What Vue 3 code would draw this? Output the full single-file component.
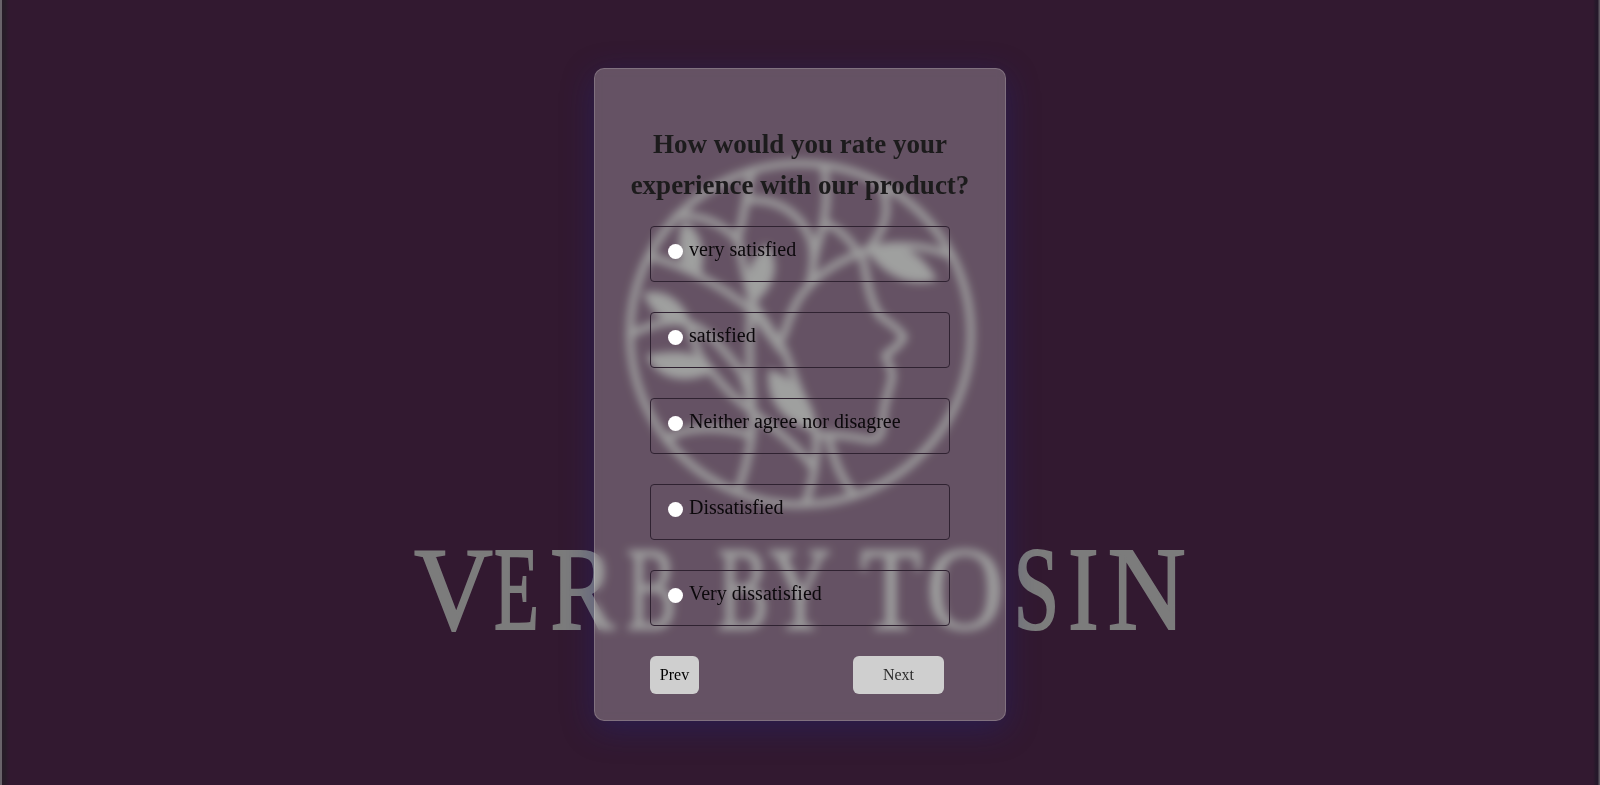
<script setup>
import { ref } from 'vue'

const selected = ref(null)
const options = ['very satisfied', 'satisfied', 'Neither agree nor disagree', 'Dissatisfied', 'Very dissatisfied']

// char, left ink edge, right ink edge, glyph ink start and end (per 1000 em)
const wordmark = [
  ['V', 416, 490, 16, 697],
  ['E', 495, 538, 12, 597],
  ['R', 552, 614, 17, 659],
  ['B', 628, 671, 17, 593],
  ['B', 719, 763, 17, 593],
  ['Y', 771, 829, 22, 703],
  ['T', 862, 920, 17, 593],
  ['O', 930, 1000, 34, 688],
  ['S', 1017, 1054, 42, 491],
  ['I', 1070, 1097, 18, 315],
  ['N', 1109, 1184, 12, 707],
].map(([char, left, right, a, b]) => {
  const scale = (right - left) / ((b - a) * 0.118)
  return { char, transform: `translate(${left - a * 0.118 * scale} 629) scale(${scale} 1)` }
})
</script>

<template>
  <main class="page">
    <svg class="brand" viewBox="0 0 1600 785" width="1600" height="785" aria-hidden="true">
      <g fill="none" stroke="#7c7c7c" stroke-width="7.6" stroke-linecap="round" stroke-linejoin="round">
        <circle cx="800.5" cy="334" r="170.5" />
        <path d="M753 170C746 190 745 215 738 237C741 258 746 280 753 303L784 350L816 434" />
        <path d="M748 200C780 198 802 216 811 240C815 255 814 268 809 285" />
        <path d="M824 168C829 193 827 218 817 247C814 260 812 270 811 279" />
        <path d="M825 223C842 229 854 245 863 260C867 277 868 297 880 316C889 323 900 329 904 337C900 344 893 350 885 355C888 364 893 369 892 378C889 393 883 403 883 419C882 435 880 440 870 440C852 437 840 434 816 435" />
        <path d="M882 188C890 207 887 229 867 250C847 258 824 268 807 288C794 302 789 319 783 337" />
        <path d="M867 251C892 242 926 244 953 257" />
        <path d="M676 216C700 214 723 223 738 241" />
        <path d="M652 257C686 266 723 287 751 310L781 350" />
        <path d="M630 335C648 325 668 320 683 322C706 326 722 348 740 370Q747 383 752 410" />
        <path d="M688 324L699 354C714 377 732 398 757 415C779 432 799 448 811 465" />
        <path d="M751 303C748 340 750 375 753 413Q753 447 740 485" />
        <path d="M667 439C685 426 723 425 752 436" />
        <path d="M816 437C818 457 813 480 806 502" />
        <path d="M829 440C835 463 841 477 854 495" />
      </g>
      <g fill="#7f807f" stroke="#7f807f" stroke-width="3" stroke-linejoin="round">
        <path d="M868 250C893 238 920 252 935 279C911 286 886 276 868 250Z" />
        <path d="M684 223C700 232 704 250 700 273L684 268C679 251 680 235 684 223Z" />
        <path d="M766 246C780 264 773 286 755 301C744 284 748 265 766 246Z" />
        <path d="M645 294C666 290 683 302 690 325C669 325 653 314 645 294Z" />
        <path d="M648 356C668 353 694 347 713 371C689 382 661 381 648 356Z" />
        <path d="M770 371C797 380 813 401 816 432C780 418 767 398 770 371Z" />
      </g>
      <g class="wordmark">
        <text v-for="(l, i) in wordmark" :key="i" :transform="l.transform">{{ l.char }}</text>
      </g>
    </svg>

    <form class="card" @submit.prevent>
      <h1 class="title">How would you rate your experience with our product?</h1>
      <div class="options">
        <label v-for="o in options" :key="o" class="option">
          <input v-model="selected" class="radio" type="radio" name="rating" :value="o" />
          <span>{{ o }}</span>
        </label>
      </div>
      <div class="actions">
        <button class="btn prev" type="button">Prev</button>
        <button class="btn next" type="button">Next</button>
      </div>
    </form>
  </main>
</template>

<style>
body {
  background: #321930;
}
</style>

<style scoped>
.page {
  position: relative;
  box-sizing: border-box;
  height: 785px;
  padding-top: 68px;
  overflow: hidden;
  font-family: "Liberation Serif", "Times New Roman", serif;
  background: linear-gradient(90deg, #69636a 0 1.5px, #271c28 2px 5px, #321930 9px calc(100% - 7px), #25182a calc(100% - 4px) calc(100% - 2px), #5d5660 calc(100% - 1px));
}
.brand {
  position: absolute;
  top: 0;
  left: 0;
}
.wordmark {
  font-family: "Liberation Serif", serif;
  font-size: 118px;
  fill: #7c7c7c;
  stroke: #7c7c7c;
  stroke-width: 2.2px;
}
.card {
  position: relative;
  box-sizing: border-box;
  width: 412px;
  height: 653px;
  margin: 0 auto;
  padding: 55px 30px 0;
  background: rgba(255, 255, 255, 0.25);
  border: 1px solid rgba(255, 255, 255, 0.18);
  border-radius: 10px;
  box-shadow: 0 8px 32px 0 rgba(31, 38, 135, 0.37);
  backdrop-filter: blur(4px);
}
.title {
  margin: 0 0 20px;
  font-size: 27px;
  line-height: 41px;
  text-align: center;
  color: #1c1b1c;
}
.options {
  display: flex;
  flex-direction: column;
  gap: 30px;
  width: 300px;
  margin: 0 auto;
}
.option {
  display: flex;
  box-sizing: border-box;
  height: 56px;
  padding: 11px 16.5px;
  gap: 6.5px;
  border: 1px solid #2f2231;
  border-radius: 4px;
  font-size: 20px;
  line-height: 23px;
  color: #0b080b;
}
.radio {
  appearance: none;
  flex: none;
  width: 15px;
  height: 15px;
  margin: 5.5px 0 0;
  border-radius: 50%;
  background: #fff;
}
.radio:checked {
  border: 4px solid #fff;
  background: #321930;
}
.actions {
  display: flex;
  justify-content: space-between;
  width: 294px;
  margin: 30px 0 0 25px;
}
.btn {
  height: 38px;
  padding: 0;
  border: 0;
  border-radius: 6px;
  background: #cfcfcf;
  font-family: inherit;
  font-size: 16px;
  color: #000;
}
.prev {
  width: 49px;
}
.next {
  width: 91px;
  color: #2c2c2c;
}
</style>
